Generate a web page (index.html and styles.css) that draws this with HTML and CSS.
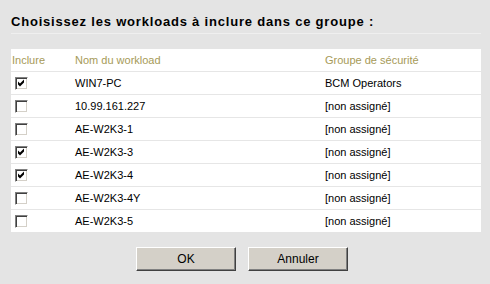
FILE: index.html
```html
<!DOCTYPE html>
<html lang="fr">
  <head>
    <meta charset="UTF-8" />
    <title>Workloads du groupe</title>
    <link rel="stylesheet" href="styles.css">
  </head>
  <body>
    <h1 class="title">Choisissez les workloads à inclure dans ce groupe :</h1>
    <table class="workloads">
      <thead>
        <tr>
          <th class="col-check">Inclure</th>
          <th class="col-name">Nom du workload</th>
          <th class="col-group">Groupe de sécurité</th>
        </tr>
      </thead>
      <tbody>
        <tr>
          <td class="col-check"><span class="cb checked"><svg viewBox="0 0 11 11" width="11" height="11"><path d="M2 3.5 L4 5.5 L8 1.5 L8 4.5 L4 8.5 L2 6.5 Z" fill="#000"/></svg></span></td>
          <td>WIN7-PC</td>
          <td>BCM Operators</td>
        </tr>
        <tr>
          <td class="col-check"><span class="cb"></span></td>
          <td>10.99.161.227</td>
          <td>[non assigné]</td>
        </tr>
        <tr>
          <td class="col-check"><span class="cb"></span></td>
          <td>AE-W2K3-1</td>
          <td>[non assigné]</td>
        </tr>
        <tr>
          <td class="col-check"><span class="cb checked"><svg viewBox="0 0 11 11" width="11" height="11"><path d="M2 3.5 L4 5.5 L8 1.5 L8 4.5 L4 8.5 L2 6.5 Z" fill="#000"/></svg></span></td>
          <td>AE-W2K3-3</td>
          <td>[non assigné]</td>
        </tr>
        <tr>
          <td class="col-check"><span class="cb checked"><svg viewBox="0 0 11 11" width="11" height="11"><path d="M2 3.5 L4 5.5 L8 1.5 L8 4.5 L4 8.5 L2 6.5 Z" fill="#000"/></svg></span></td>
          <td>AE-W2K3-4</td>
          <td>[non assigné]</td>
        </tr>
        <tr>
          <td class="col-check"><span class="cb"></span></td>
          <td>AE-W2K3-4Y</td>
          <td>[non assigné]</td>
        </tr>
        <tr>
          <td class="col-check"><span class="cb"></span></td>
          <td>AE-W2K3-5</td>
          <td>[non assigné]</td>
        </tr>
      </tbody>
    </table>
    <div class="actions">
      <button type="button">OK</button>
      <button type="button">Annuler</button>
    </div>
  </body>
</html>
```

FILE: styles.css
```css
body {
  margin: 0;
  background: #e4e4e4;
  font-family: "Liberation Sans", Arial, sans-serif;
  color: #000;
}
.title {
  margin: 0 9px 15px 11px;
  padding: 14px 0 3px;
  font-size: 13px;
  line-height: 16px;
  font-weight: bold;
  letter-spacing: 0.8px;
  color: #000;
  border-bottom: 1px solid #efefef;
}
.workloads {
  margin-left: 11px;
  width: 470px;
  border-collapse: collapse;
  background: #fff;
  font-size: 11px;
}
.workloads th {
  height: 22px;
  padding: 0;
  text-align: left;
  font-weight: normal;
  color: #a69a58;
  border-bottom: 1px solid #e6e6e6;
}
.workloads td {
  height: 22px;
  padding: 0;
  border-bottom: 1px solid #e6e6e6;
}
.workloads tbody tr:last-child td {
  border-bottom: none;
}
.workloads .col-check {
  width: 63px;
  padding-left: 1px;
}
.workloads .col-name {
  width: 250px;
}
.cb {
  display: block;
  box-sizing: border-box;
  width: 13px;
  height: 13px;
  margin-left: 3px;
  background: #fff;
  border-top: 1px solid #808080;
  border-left: 1px solid #808080;
  border-right: 1px solid #fff;
  border-bottom: 1px solid #fff;
  box-shadow: inset 1px 1px 0 #404040, inset -1px -1px 0 #d4d0c8;
  position: relative;
}
.cb svg {
  position: absolute;
  left: 0;
  top: 0;
}
.actions {
  display: flex;
  justify-content: center;
  gap: 12px;
  margin-top: 15px;
  padding-right: 6px;
}
.actions button {
  box-sizing: border-box;
  width: 100px;
  height: 24px;
  padding: 0;
  background: #d4d0c8;
  font-family: "Liberation Sans", Arial, sans-serif;
  font-size: 12px;
  color: #000;
  border-top: 1px solid #fff;
  border-left: 1px solid #fff;
  border-right: 1px solid #404040;
  border-bottom: 1px solid #404040;
  box-shadow: inset -1px -1px 0 #808080;
  cursor: pointer;
}
```
